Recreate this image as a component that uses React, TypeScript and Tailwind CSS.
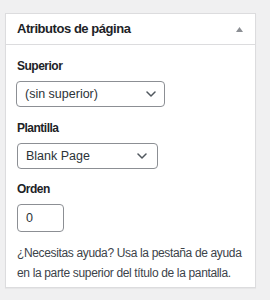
import React from "react";

function Chevron() {
  return (
    <svg width="10" height="6" viewBox="0 0 10 6" className="shrink-0">
      <path d="M1 1l4 4 4-4" fill="none" stroke="#50575e" strokeWidth="1.5" strokeLinecap="round" strokeLinejoin="round" />
    </svg>
  );
}

export default function App() {
  return (
    <div className="w-[270px] h-[300px] bg-[#f0f0f1] pt-[13px] pl-[5px]" style={{ fontFamily: "'Liberation Sans', Arial, sans-serif" }}>
      <div className="w-[251px] h-[275px] bg-white border border-[#dcdcde] shadow-[0_1px_1px_rgba(0,0,0,0.04)]">
        <div className="h-[31px] border-b border-[#dcdcde] flex items-center justify-between pl-[11px] pr-[12px]">
          <span className="text-[13px] font-bold text-[#1d2327] tracking-[-0.45px]">Atributos de página</span>
          <svg width="7" height="5" viewBox="0 0 7 5"><path d="M3.5 0L7 5H0z" fill="#8c8f94" /></svg>
        </div>
        <div className="pl-[10px] pr-[6px] pt-[11px] text-[#1d2327]">
          <div className="h-[20px] leading-[20px] pl-[1px] text-[12px] font-bold tracking-[-0.5px]">Superior</div>
          <div className="mt-[5px] w-[149px] h-[26px] border border-[#8c8f94] rounded-[4px] flex items-center justify-between pl-[8px] pr-[8px] text-[12.5px] text-[#2c3338]">
            <span>(sin superior)</span>
            <Chevron />
          </div>
          <div className="mt-[11px] h-[20px] leading-[20px] pl-[1px] text-[12px] font-bold tracking-[-0.5px]">Plantilla</div>
          <div className="mt-[5px] w-[141px] ml-[1px] h-[26px] border border-[#8c8f94] rounded-[4px] flex items-center justify-between pl-[8px] pr-[10px] text-[12.5px] text-[#2c3338]">
            <span>Blank Page</span>
            <Chevron />
          </div>
          <div className="mt-[10px] h-[20px] leading-[20px] pl-[1px] text-[12px] font-bold tracking-[-0.5px]">Orden</div>
          <div className="mt-[5px] w-[47px] ml-[1px] h-[28px] border border-[#8c8f94] rounded-[4px] flex items-center pl-[8px] text-[12.5px] text-[#2c3338]">
            0
          </div>
          <p className="mt-[11px] pl-[1px] text-[12px] leading-[20px] tracking-[-0.35px] text-[#3c434a]">
            ¿Necesitas ayuda? Usa la pestaña de ayuda en la parte superior del título de la pantalla.
          </p>
        </div>
      </div>
    </div>
  );
}
